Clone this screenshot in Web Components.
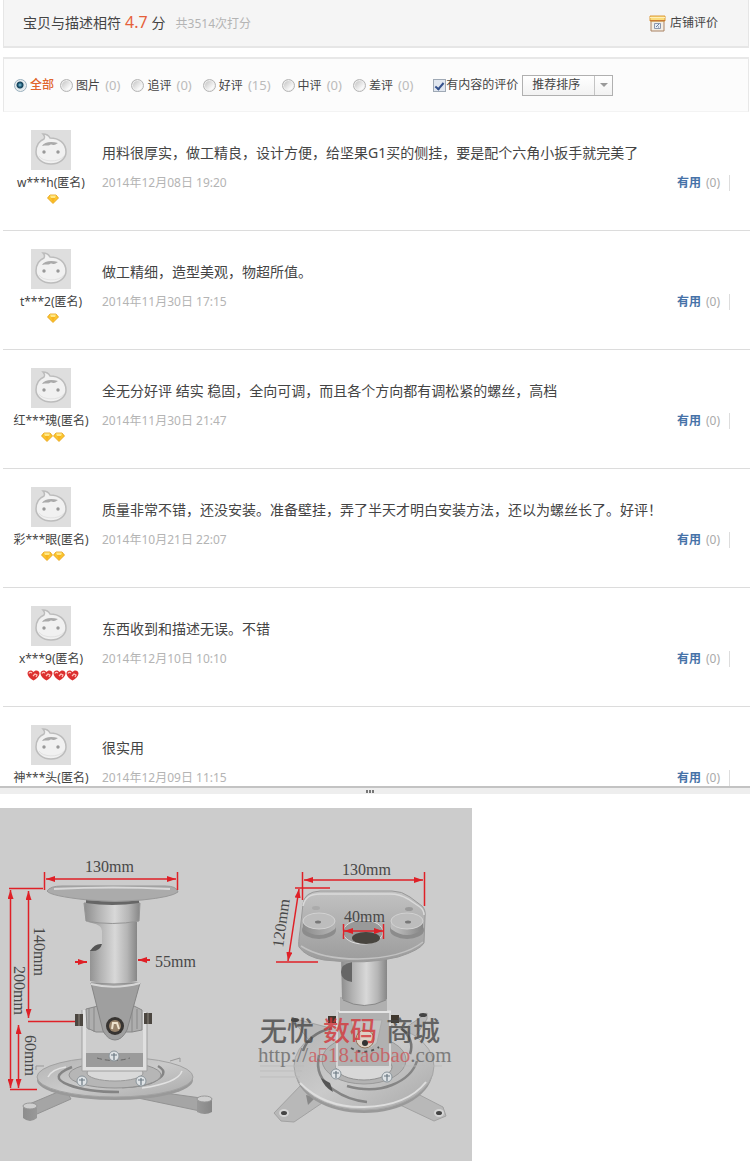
<!DOCTYPE html>
<html lang="zh-CN">
<head>
<meta charset="utf-8">
<title>宝贝评价</title>
<style>
  body {
    margin: 0;
    background: #fff;
    color: #444;
    font-family: "Noto Sans", "Noto Sans CJK SC", sans-serif;
    font-size: 12px;
    line-height: 16px;
  }
</style>
</head>
<body>
<rate-summary score="4.7" total="3514"></rate-summary>
<rate-filter></rate-filter>
<main>
  <review-item name="w***h" date="2014年12月08日 19:20" rank="diamond" level="1">用料很厚实，做工精良，设计方便，给坚果G1买的侧挂，要是配个六角小扳手就完美了</review-item>
  <review-item name="t***2" date="2014年11月30日 17:15" rank="diamond" level="1">做工精细，造型美观，物超所值。</review-item>
  <review-item name="红***瑰" date="2014年11月30日 21:47" rank="diamond" level="2">全无分好评 结实 稳固，全向可调，而且各个方向都有调松紧的螺丝，高档</review-item>
  <review-item name="彩***眼" date="2014年10月21日 22:07" rank="diamond" level="2">质量非常不错，还没安装。准备壁挂，弄了半天才明白安装方法，还以为螺丝长了。好评！</review-item>
  <review-item name="x***9" date="2014年12月10日 10:10" rank="heart" level="4">东西收到和描述无误。不错</review-item>
  <review-item name="神***头" date="2014年12月09日 11:15" last>很实用</review-item>
</main>
<pane-splitter></pane-splitter>
<product-figure></product-figure>

<script>
function makeTemplate(html) {
  const template = document.createElement("template");
  template.innerHTML = html;
  return template;
}

const summaryTemplate = makeTemplate(`
<style>
  :host {
    display: flex;
    align-items: center;
    justify-content: space-between;
    box-sizing: border-box;
    height: 48px;
    margin: 0 1px 0 3px;
    padding: 0 30px 0 19px;
    background: #f5f5f5;
    border: solid #e6e6e6;
    border-width: 0 1px 2px;
  }
  .score {
    display: flex;
    align-items: baseline;
    gap: 4px;
    font-size: 14px;
    line-height: 20px;
  }
  .score strong {
    color: #e5603a;
    font-size: 16px;
    font-weight: 400;
  }
  .score small {
    margin-left: 6px;
    color: #b4b4b4;
    font-size: 12px;
  }
  a {
    display: flex;
    align-items: center;
    gap: 4px;
    color: #444;
    text-decoration: none;
  }
</style>
<div class="score">
  <span>宝贝与描述相符</span><strong></strong><span>分</span><small></small>
</div>
<a href="#shop">
  <svg width="17" height="17" viewBox="0 0 17 17" aria-hidden="true">
    <path d="M2 6h13v10H2z" fill="#f3eee6" stroke="#a98263"/>
    <path d="M1 1h15v5H1z" fill="#fbdc7c" stroke="#dc9b3c"/>
    <path d="M1 2.500h15" stroke="#fff0b8"/>
    <path d="M1 5.500h15" stroke="#c97a35"/>
    <path d="M5.500 8.500h6v5h-6z" fill="#e6edf6" stroke="#8a97ae"/>
    <path d="M7 12l3-3M9 12h1" stroke="#6b7da0"/>
  </svg>
  <span>店铺评价</span>
</a>
`);

class RateSummary extends HTMLElement {
  constructor() {
    super();
    const shadowRoot = this.attachShadow({ mode: "open" });
    shadowRoot.appendChild(summaryTemplate.content.cloneNode(true));
  }

  connectedCallback() {
    this.shadowRoot.querySelector("strong").textContent = this.getAttribute("score");
    this.shadowRoot.querySelector("small").textContent = `共${this.getAttribute("total")}次打分`;
  }
}

const filterTemplate = makeTemplate(`
<style>
  :host {
    display: block;
    margin: 9px 1px 0 3px;
    background: #fcfcfc;
    border: solid #e8e8e8;
    border-width: 2px 1px 0 1px;
    border-bottom: 1px solid #f3f3f3;
  }
  form {
    display: flex;
    align-items: center;
    height: 52px;
    padding-left: 10px;
  }
  .rates {
    display: flex;
    gap: 11px;
    margin-right: 20px;
  }
  label {
    display: flex;
    align-items: center;
    gap: 3px;
  }
  .rates label:first-child {
    margin-right: -5px;
  }
  label i {
    margin-left: 2px;
    color: #bbb;
    font-size: 13px;
    font-style: normal;
  }
  input {
    appearance: none;
    flex: none;
    width: 13px;
    height: 13px;
    margin: 0;
  }
  input[type=radio] {
    border: 1px solid #b5b5b5;
    border-radius: 50%;
    background: linear-gradient(135deg, #bdbdbd, #fff 80%);
    box-shadow: inset 0 0 0 1px #eee;
  }
  input[type=radio]:checked {
    border-color: #9ab1bf;
    background: radial-gradient(circle at 5px 5px, #8ec9de 0, #1f5d78 2px, #173f57 3px, #dbe8ee 4px);
  }
  input:checked + .all {
    color: #e0652c;
    font-weight: 500;
  }
  .check {
    gap: 0;
  }
  input[type=checkbox] {
    border: 1px solid #9fa9b5;
    background: #e1e7f0;
    display: grid;
    place-items: center;
  }
  input[type=checkbox]:checked::before {
    content: "";
    width: 3px;
    height: 7px;
    border: solid #33508c;
    border-width: 0 2px 2px 0;
    transform: rotate(40deg);
  }
  .sort {
    display: grid;
    margin-left: 4px;
  }
  .sort > * {
    grid-area: 1 / 1;
  }
  select {
    appearance: none;
    width: 91px;
    height: 21px;
    padding: 0 20px 0 9px;
    border: 1px solid #b0b0b0;
    border-radius: 0;
    background: linear-gradient(#fff, #f2f2f2);
    color: #444;
    font: inherit;
  }
  .arrow {
    justify-self: end;
    display: grid;
    place-items: center;
    width: 17px;
    margin: 1px;
    border-left: 1px solid #c4c4c4;
    pointer-events: none;
  }
  .arrow::before {
    content: "";
    border: solid transparent;
    border-width: 4px 4px 0;
    border-top-color: #999;
  }
</style>
<form>
  <div class="rates">
    <label><input type="radio" name="rate" checked><span class="all">全部</span></label>
    <label><input type="radio" name="rate"><span>图片 <i>(0)</i></span></label>
    <label><input type="radio" name="rate"><span>追评 <i>(0)</i></span></label>
    <label><input type="radio" name="rate"><span>好评 <i>(15)</i></span></label>
    <label><input type="radio" name="rate"><span>中评 <i>(0)</i></span></label>
    <label><input type="radio" name="rate"><span>差评 <i>(0)</i></span></label>
  </div>
  <label class="check"><input type="checkbox" checked><span>有内容的评价</span></label>
  <div class="sort">
    <select aria-label="排序"><option>推荐排序</option></select>
    <span class="arrow"></span>
  </div>
</form>
`);

class RateFilter extends HTMLElement {
  constructor() {
    super();
    const shadowRoot = this.attachShadow({ mode: "open" });
    shadowRoot.appendChild(filterTemplate.content.cloneNode(true));
  }
}

const avatarTemplate = makeTemplate(`
<style>
  :host {
    display: block;
    width: 40px;
    height: 40px;
    background: #dedede;
  }
  svg {
    display: block;
  }
</style>
<svg width="40" height="40" viewBox="0 0 40 40" aria-hidden="true">
  <path d="M13 9C14 7 13 5 12 4c4 0 6 2 7 4 9 0 16 5 16 14 0 7-7 12-15 12S5 29 5 22c0-6 3-11 8-13z" fill="#f1f1f1" stroke="#bcbcbc" stroke-width="1.500"/>
  <path d="M11 16c2-4 9-5 16-3-2 1-3 2-4 2-2 0-3-1-4 0-2 1-4 0-8 1z" fill="#aaa"/>
  <circle cx="13" cy="22" r="1.700" fill="#999"/>
  <circle cx="27" cy="22" r="1.700" fill="#999"/>
  <path d="M8 26c3 6 20 7 25 0" fill="none" stroke="#e2e2e2"/>
</svg>
`);

class BuyerAvatar extends HTMLElement {
  constructor() {
    super();
    const shadowRoot = this.attachShadow({ mode: "open" });
    shadowRoot.appendChild(avatarTemplate.content.cloneNode(true));
  }
}

const rankIcons = {
  diamond: `<svg width="12" height="10" viewBox="0 0 12 10">
    <path d="M3 1h6l2.500 3L6 9.500.5 4z" fill="#fbc52d" stroke="#e39c14" stroke-width=".8"/>
    <path d="M3 1.500h6L8 4H4z" fill="#ffe888"/><path d="M4 4l2 5 2-5" fill="#f8b421"/></svg>`,
  heart: `<svg width="13" height="11" viewBox="0 0 13 11">
    <path d="M6.500 10.500C3 8.500.5 6 .5 3.500.5 0 5-.5 6.500 2 8-.5 12.500 0 12.500 3.500c0 2.500-2.500 5-6 7z" fill="#dc3030"/>
    <path d="M2 3.500C2.500 2 4 2 5 3M6 6l2-2 2 1-1 2" fill="none" stroke="#ffc4bd" stroke-width="1.200"/></svg>`
};

class BuyerRank extends HTMLElement {
  constructor() {
    super();
    this.attachShadow({ mode: "open" });
  }

  connectedCallback() {
    const icon = rankIcons[this.getAttribute("kind")] || "";
    this.shadowRoot.innerHTML = `
      <style>
        :host { display: flex; align-items: center; height: 10px; padding-left: 4px; }
        svg { display: block; }
      </style>` + icon.repeat(Number(this.getAttribute("level")));
  }
}

const reviewTemplate = makeTemplate(`
<style>
  :host {
    display: grid;
    grid-template-columns: 96px 1fr;
    column-gap: 3px;
    margin-left: 3px;
    padding: 18px 0 26px;
    border-bottom: 1px solid #dcdcdc;
  }
  :host([last]) {
    padding-bottom: 0;
    border: 0;
  }
  .buyer {
    display: flex;
    flex-direction: column;
    align-items: center;
    gap: 3px;
    white-space: nowrap;
  }
  .name {
    margin-top: 2px;
  }
  .content {
    padding-top: 12px;
  }
  p {
    margin: 0 0 11px;
    font-size: 14px;
    line-height: 22px;
  }
  .meta {
    display: flex;
    justify-content: space-between;
  }
  time {
    color: #b4b4b4;
  }
  .useful {
    display: flex;
    gap: 5px;
    margin-right: 20px;
    padding-right: 9px;
    border-right: 1px solid #ddd;
  }
  .useful a {
    color: #4672a8;
    font-weight: 700;
    text-decoration: none;
  }
  .useful span {
    color: #aaa;
  }
</style>
<div class="buyer">
  <buyer-avatar></buyer-avatar>
  <span class="name"></span>
</div>
<div class="content">
  <p><slot></slot></p>
  <div class="meta">
    <time></time>
    <div class="useful"><a href="#useful">有用</a><span>(0)</span></div>
  </div>
</div>
`);

class ReviewItem extends HTMLElement {
  constructor() {
    super();
    const shadowRoot = this.attachShadow({ mode: "open" });
    shadowRoot.appendChild(reviewTemplate.content.cloneNode(true));
  }

  connectedCallback() {
    this.shadowRoot.querySelector(".name").textContent = `${this.getAttribute("name")}(匿名)`;
    this.shadowRoot.querySelector("time").textContent = this.getAttribute("date");
    const kind = this.getAttribute("rank");
    if (kind) {
      const rank = document.createElement("buyer-rank");
      rank.setAttribute("kind", kind);
      rank.setAttribute("level", this.getAttribute("level"));
      this.shadowRoot.querySelector(".buyer").appendChild(rank);
    }
  }
}

const splitterTemplate = makeTemplate(`
<style>
  :host {
    display: flex;
    justify-content: center;
    align-items: center;
    gap: 1px;
    height: 6px;
    padding-right: 10px;
    border-top: 2px solid #c3c3c3;
    background: #eee;
  }
  i {
    width: 2px;
    height: 3px;
    background: #777;
  }
</style>
<i></i><i></i><i></i>
`);

class PaneSplitter extends HTMLElement {
  constructor() {
    super();
    const shadowRoot = this.attachShadow({ mode: "open" });
    shadowRoot.appendChild(splitterTemplate.content.cloneNode(true));
  }
}

const figureTemplate = makeTemplate(`
<style>
  :host {
    display: block;
    max-width: 472px;
    margin-top: 14px;
    background: #ccc;
  }
  svg {
    display: block;
    width: 100%;
  }
  text {
    font-family: "Liberation Serif", "Noto Sans CJK SC", serif;
    font-size: 16px;
    fill: #484848;
  }
  .lines path {
    fill: none;
    stroke: #df2027;
    stroke-width: 1.500;
  }
  .lines .span {
    marker-start: url(#tip);
    marker-end: url(#tip);
  }
  .lines .to {
    stroke-width: 2;
    marker-end: url(#tip);
  }
  .mark { opacity: .8; }
  .mark .shop { font-size: 27px; font-weight: 500; }
  .mark .url { font-size: 21px; opacity: .75; }
  .mark .red { fill: #d3373b; }
</style>
<svg viewBox="0 808 472 353">
  <defs>
    <linearGradient id="tube">
      <stop offset="0" stop-color="#8d8d8d"/><stop offset=".25" stop-color="#b2b2b2"/>
      <stop offset=".55" stop-color="#d8d8d8"/><stop offset=".8" stop-color="#b5b5b5"/>
      <stop offset="1" stop-color="#868686"/>
    </linearGradient>
    <linearGradient id="plate" x2="0" y2="1">
      <stop offset="0" stop-color="#c2c2c2"/><stop offset=".4" stop-color="#b2b2b2"/><stop offset="1" stop-color="#9c9c9c"/>
    </linearGradient>
    <linearGradient id="disc" x2="1" y2="1">
      <stop offset="0" stop-color="#b3b3b3"/><stop offset=".5" stop-color="#cacaca"/><stop offset="1" stop-color="#a9a9a9"/>
    </linearGradient>
    <marker id="tip" orient="auto-start-reverse" markerUnits="userSpaceOnUse" markerWidth="9" markerHeight="6" refX="9" refY="3" viewBox="0 0 9 6">
      <path d="M0 0l9 3-9 3z" style="fill:#df2027;stroke:none"/>
    </marker>
    <g id="screw">
      <circle r="5" fill="#dfe3e6" stroke="#8a949a"/>
      <path d="M-3-1h6M0-3v7" stroke="#6b7882" stroke-width="1.200"/>
    </g>
  </defs>

  <!-- side view -->
  <g>
    <path d="M65 1089L27 1105v8l10 1 34-15zM138 1098l62 13 10-3-2-9-50-7z" fill="#a5a5a5" stroke="#939393"/>
    <path d="M23 1105v13q7 6 14 0v-13zM197 1098v14q8 4 15 0v-14z" fill="url(#tube)"/>
    <ellipse cx="30" cy="1106" rx="7" ry="3" fill="#cfcfcf" stroke="#999"/>
    <ellipse cx="204.500" cy="1099" rx="7.500" ry="3" fill="#cfcfcf" stroke="#999"/>
    <path d="M36 1070v-4h8M170 1061l10-3v4" fill="none" stroke="#999"/>
    <ellipse cx="115" cy="1080" rx="78" ry="20" fill="#999"/>
    <ellipse cx="115" cy="1077" rx="78" ry="20" fill="url(#disc)" stroke="#a2a2a2"/>
    <path d="M72 1067q-25 10-3 18 18 7 50 7M158 1066q14 8-8 17-14 4-28 4" fill="none" stroke="#848484" stroke-width="2.500"/>
    <path d="M48 1077q4-8 18-10M182 1071q-4 12-40 17" fill="none" stroke="#e2e2e2" stroke-width="1.500"/>
    <ellipse cx="115" cy="1075" rx="46" ry="13" fill="#b6b6b6" stroke="#929292"/>
    <ellipse cx="115" cy="1073" rx="28" ry="8" fill="#d9d9d9" stroke="#999"/>
    <path d="M85 1053h60v16H85z" fill="#9b9b9b"/>
    <path d="M97 1058q17 5 33 0" fill="none" stroke="#666" stroke-dasharray="5 3"/>
    <path d="M84 1010v59h61v-57" fill="none" stroke="#e0e0e0" stroke-width="4"/>
    <path d="M82 1010v61h65v-59" fill="none" stroke="#a0a0a0"/>
    <path d="M75 1014h8v12h-8zM144 1013h8v11h-8z" fill="#4b4640"/>
    <path d="M79 1014v12M148 1013v11" stroke="#8b857d"/>
    <path d="M86 1009l12-3h36l8 4v20l-10 2H96l-9-4z" fill="#aeaeae" stroke="#888"/>
    <path d="M89 1008v22M94 1007v25M132 1008v24M137 1009v20" stroke="#888"/>
    <path d="M91 983h49l-13 47q-5 10-12 10t-12-9z" fill="#9f9f9f" stroke="#858585"/>
    <path d="M91 984q24 6 49-1" fill="none" stroke="#d7d7d7" stroke-width="2"/>
    <circle cx="115" cy="1026" r="9" fill="#373431"/>
    <circle cx="115" cy="1026" r="6" fill="#97826a"/>
    <path d="M112 1029l1-6h4l2 6" stroke="#ede2ce" stroke-width="2" fill="none"/>
    <path d="M88 922h49v59q-23 5-47 0v-31q8 0 12-6v-13q0-6-10-8z" fill="url(#tube)"/>
    <path d="M90 951q10 1 12-7-7-1-12 7z" fill="#555"/>
    <path d="M84 903h56l-1 18q-27 5-53 0z" fill="url(#tube)" stroke="#959595"/>
    <path d="M86 899h53v4q-27 4-53 0z" fill="#666"/>
    <path d="M47 891q3-5 15-5h103q12 0 13 6-6 5-36 8-27 3-54 0-38-4-41-9z" fill="#ababab" stroke="#999"/>
    <path d="M54 889q60-3 116 0" fill="none" stroke="#d9d9d9" stroke-width="2"/>
    <use href="#screw" x="82" y="1081"/><use href="#screw" x="141" y="1081"/><use href="#screw" x="114" y="1056"/>
  </g>

  <!-- view from above -->
  <g>
    <path d="M292 1018l42 11-18 20-20-25zM427 1013l-35 24 15 12 20-30zM303 1083l-29 30 7 8 13 1 31-21zM398 1104l36 17 12-5-3-9-33-17z" fill="#b8b8b8" stroke="#a2a2a2"/>
    <ellipse cx="295" cy="1020" rx="4" ry="2" fill="#444"/><ellipse cx="423" cy="1015" rx="4" ry="2" fill="#444"/>
    <ellipse cx="284" cy="1113" rx="5" ry="4" fill="#d5d5d5"/><ellipse cx="439" cy="1113" rx="5" ry="4" fill="#d5d5d5"/>
    <ellipse cx="284" cy="1113" rx="3" ry="2" fill="#444"/><ellipse cx="439" cy="1113" rx="3" ry="2" fill="#444"/>
    <path d="M306 1095l10 2-8 8z" fill="#888"/>
    <ellipse cx="364" cy="1070" rx="69" ry="43" fill="#999"/>
    <ellipse cx="364" cy="1066" rx="70" ry="44" fill="url(#disc)" stroke="#a6a6a6"/>
    <ellipse cx="364" cy="1060" rx="42" ry="24" fill="#b3b3b3" stroke="#999"/>
    <path d="M303 1051q5-17 29-23M401 1028q14 12 9 26" fill="none" stroke="#777" stroke-width="2.500"/>
    <path d="M319 1055q-5 22 15 35 14 10 33 12M347 1086q25 7 45-1 20-8 25-24" fill="none" stroke="#858585" stroke-width="2.500"/>
    <path d="M321 1078q3 9 12 14l-3-9z" fill="#555"/>
    <path d="M300 1083q25 25 64 24 43-1 62-25" fill="none" stroke="#dedede" stroke-width="2"/>
    <ellipse cx="364" cy="1067" rx="28" ry="13" fill="#d8d8d8" stroke="#909090"/>
    <path d="M337 1011h53v56h-53z" fill="#b1b1b1" stroke="#d6d6d6" stroke-width="2"/>
    <path d="M340 997h47v15h-47z" fill="#b0b0b0"/><path d="M339 1012h52" stroke="#e4e4e4" stroke-width="2"/>
    <path d="M328 1016h8v7h-8zM391 1015h8v8h-8z" fill="#40382e"/>
    <path d="M351 1020h31l-5 23q-11 12-21 0z" fill="#c2c2c2" stroke="#aaa"/>
    <circle cx="365" cy="1039" r="9" fill="#ded2c5" stroke="#91745b"/><circle cx="365" cy="1043" r="3" fill="#333"/>
    <path d="M351 1048q14 8 28-1" fill="none" stroke="#555" stroke-width="2" stroke-dasharray="3 4"/>
    <path d="M341 957h46v42q-22 13-45 0z" fill="url(#tube)"/>
    <path d="M343 1000q21 11 43 0" fill="none" stroke="#888"/>
    <path d="M352 962v20q-11-2-11-10t11-10z" fill="#666"/>
    <path d="M303 904q1-12 17-13h72q10 0 18 6l12 9q4 4 3 11l-1 26q-4 7-26 14-31 8-74 3-18-3-25-13-1-3 1-16z" fill="url(#plate)" stroke="#999"/>
    <path d="M303 906q2-12 17-12h70q10 0 18 5l12 8q4 3 4 8" fill="none" stroke="#dadada" stroke-width="1.500"/>
    <path d="M301 946q20 13 57 13 45-1 65-17" fill="none" stroke="#c2c2c2" stroke-width="1.500"/>
    <ellipse cx="319" cy="930" rx="17" ry="9" fill="#8c8c8c"/><ellipse cx="407" cy="930" rx="17" ry="9" fill="#8c8c8c"/>
    <path d="M303 921h32v8q-16 12-32 0zM391 921h32v8q-16 12-32 0z" fill="url(#tube)"/>
    <ellipse cx="319" cy="921" rx="16" ry="8" fill="#bdbdbd" stroke="#d2d2d2"/><ellipse cx="407" cy="921" rx="16" ry="8" fill="#bdbdbd" stroke="#d2d2d2"/>
    <ellipse cx="318" cy="922" rx="3" ry="1.500" fill="#777"/><ellipse cx="408" cy="922" rx="3" ry="1.500" fill="#777"/>
    <ellipse cx="316" cy="908" rx="4" ry="2" fill="#aaa"/><ellipse cx="409" cy="909" rx="4" ry="2" fill="#999"/>
    <ellipse cx="363" cy="932" rx="20" ry="12" fill="#999" stroke="#ddd"/>
    <ellipse cx="366" cy="938" rx="14" ry="6" fill="#48453f"/>
    <use href="#screw" x="336" y="1074"/><use href="#screw" x="387" y="1077"/>
  </g>

  <g class="lines">
    <path d="M44.500 872v18M177.500 872v18M9 888.500h34M28 1021.500h47M10 1089.500h27"/>
    <path class="span" d="M46 879h130"/>
    <path class="span" d="M10.500 890v198"/>
    <path class="span" d="M28.500 891v127"/>
    <path class="span" d="M18.500 1025v63"/>
    <path class="to" d="M75 962h12"/><path class="to" d="M150 960h-12"/>
    <path d="M302.500 872v28M424.500 872v34M295 888h35M276 962h42M343.500 924v15M383.500 924v15"/>
    <path class="span" d="M304 880h119"/>
    <path class="span" d="M299 889l-11 72"/>
    <path class="span" d="M344 931h39"/>
  </g>

  <text x="85" y="872">130mm</text>
  <text x="155" y="967">55mm</text>
  <text transform="translate(34 927) rotate(90)">140mm</text>
  <text transform="translate(14 966) rotate(90)">200mm</text>
  <text transform="translate(25 1035) rotate(90)">60mm</text>
  <text x="342" y="875">130mm</text>
  <text x="344" y="922">40mm</text>
  <text transform="translate(283 948) rotate(-82)">120mm</text>

  <g class="mark">
    <path d="M260 1066h44M260 1071h42M260 1077h40M402 1066h40" stroke="#bbb"/>
    <text class="shop" y="1041"><tspan x="260">无忧</tspan><tspan class="red" x="323">数码</tspan><tspan x="386">商城</tspan></text>
    <text class="url" x="258" y="1062">http://<tspan class="red">a518.taobao</tspan>.com</text>
  </g>
</svg>
`);

class ProductFigure extends HTMLElement {
  constructor() {
    super();
    const shadowRoot = this.attachShadow({ mode: "open" });
    shadowRoot.appendChild(figureTemplate.content.cloneNode(true));
  }
}

window.customElements.define("rate-summary", RateSummary);
window.customElements.define("rate-filter", RateFilter);
window.customElements.define("buyer-avatar", BuyerAvatar);
window.customElements.define("buyer-rank", BuyerRank);
window.customElements.define("review-item", ReviewItem);
window.customElements.define("pane-splitter", PaneSplitter);
window.customElements.define("product-figure", ProductFigure);
</script>
</body>
</html>
